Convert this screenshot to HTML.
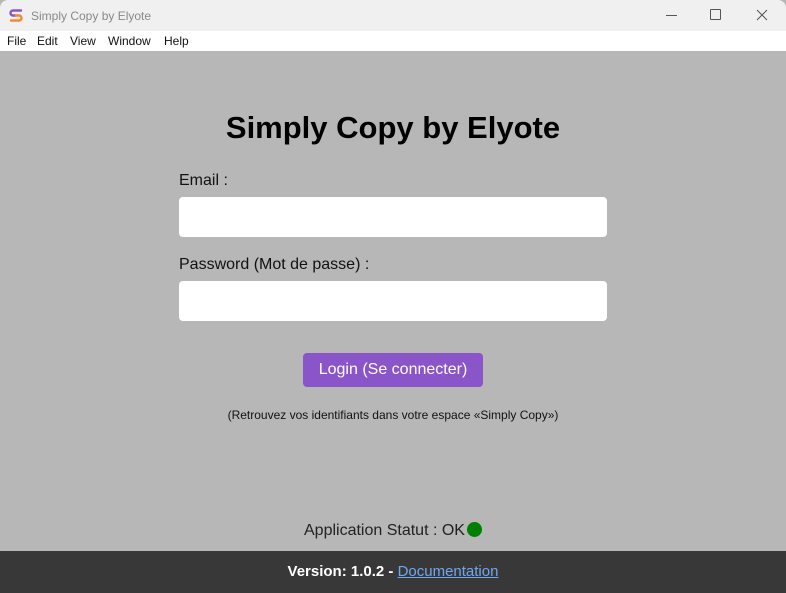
<!DOCTYPE html>
<html><head><meta charset="utf-8"><style>
*{margin:0;padding:0;box-sizing:border-box}
body{width:786px;height:593px;overflow:hidden;background:#b7b7b7;font-family:"Liberation Sans",sans-serif;position:relative}
.title{position:absolute;left:0;top:0;width:786px;height:31px;background:#f0f0f0;border-radius:8px 8px 0 0}
.title span{position:absolute;left:31px;top:9px;font-size:12px;color:#888}
.menu{position:absolute;top:31px;left:0;width:786px;height:20px;background:#fff;font-size:12px;color:#111}
.menu span{position:absolute;top:3px}
h1{position:absolute;top:110px;width:786px;text-align:center;font-size:31px;font-weight:bold;color:#000}
.lbl{position:absolute;left:179px;font-size:16px;color:#111}
.inp{position:absolute;left:179px;width:428px;height:40px;background:#fff;border-radius:4px}
.btn{position:absolute;left:303px;top:353px;width:180px;height:34px;background:#8a55c8;color:#fff;border-radius:4px;font-size:16px;text-align:center;line-height:34px}
.note{position:absolute;top:408px;width:786px;text-align:center;font-size:12px;color:#111}
.stat{position:absolute;top:522px;left:304px;font-size:16px;color:#222}
.dot{position:absolute;left:467px;top:522px;width:15px;height:15px;border-radius:50%;background:#008000}
.foot{position:absolute;top:551px;left:0;width:786px;height:42px;background:#383838;color:#fff;font-size:15px;text-align:center;line-height:42px;font-weight:bold}
.foot a{color:#6ea8f0;font-weight:normal;text-decoration:underline}
</style></head><body>
<div class="title">
<svg style="position:absolute;left:8px;top:7px" width="16" height="16" viewBox="0 0 16 16"><path d="M13 3.5H5a2.5 2.5 0 0 0 0 5h3" stroke="#8a55c8" stroke-width="2.4" fill="none" stroke-linecap="round"/><path d="M8 8.5h3a2.5 2.5 0 0 1 0 5H3" stroke="#f08a30" stroke-width="2.4" fill="none" stroke-linecap="round"/></svg>
<span>Simply Copy by Elyote</span>
<div style="position:absolute;left:666px;top:15px;width:11px;height:1px;background:#555"></div>
<div style="position:absolute;left:710px;top:9px;width:11px;height:11px;border:1px solid #555;border-radius:1px"></div>
<svg style="position:absolute;left:756px;top:9px" width="12" height="12"><path d="M1 1L11 11M11 1L1 11" stroke="#555" stroke-width="1"/></svg>
</div>
<div class="menu"><span style="left:7px">File</span><span style="left:37px">Edit</span><span style="left:70px">View</span><span style="left:108px">Window</span><span style="left:164px">Help</span></div>
<h1>Simply Copy by Elyote</h1>
<div class="lbl" style="top:172px">Email :</div>
<div class="inp" style="top:197px"></div>
<div class="lbl" style="top:256px">Password (Mot de passe) :</div>
<div class="inp" style="top:281px"></div>
<div class="btn">Login (Se connecter)</div>
<div class="note">(Retrouvez vos identifiants dans votre espace «Simply Copy»)</div>
<div class="stat">Application Statut : OK</div>
<div class="dot"></div>
<div class="foot">Version: 1.0.2 - <a>Documentation</a></div>
</body></html>
